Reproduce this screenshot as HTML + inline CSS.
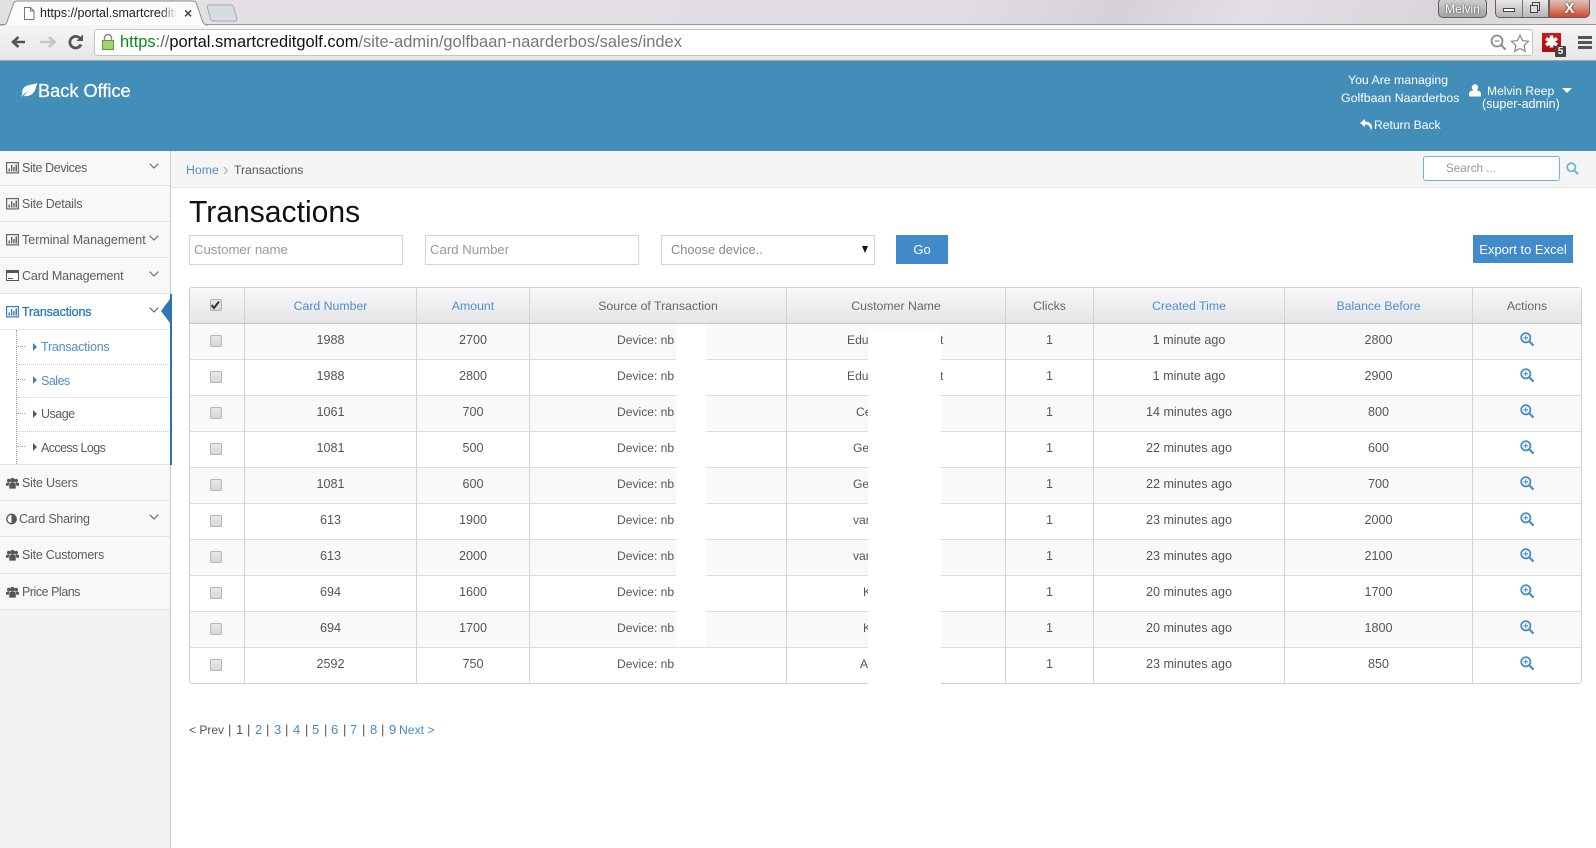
<!DOCTYPE html>
<html><head><meta charset="utf-8"><title>Transactions</title>
<style>
*{box-sizing:border-box}
html,body{margin:0;padding:0;width:1596px;height:848px;overflow:hidden;background:#fff;font-family:"Liberation Sans",sans-serif;font-size:13px;color:#555}
a{color:#428bca;text-decoration:none}
.t{position:absolute;white-space:nowrap;line-height:16px}
.abs{position:absolute}
#strip{left:0;top:0;width:1596px;height:25px;background:linear-gradient(115deg,#e4dee5 0,#e2dce4 60%,#d6d0d8 70%,#e4dee6 78%,#dad4db 90%,#e6e0e7 100%);border-bottom:1px solid #9a979b}
#bar{left:0;top:25px;width:1596px;height:36px;background:linear-gradient(#f6f6f6,#e6e6e6);border-bottom:1px solid #a5a5a5}
#url{left:94px;top:29px;width:1439px;height:27px;background:#fff;border:1px solid #c4c4c4;border-radius:3px}
#hdr{left:0;top:61px;width:1596px;height:90px;background:#438eb9}
#side{left:0;top:151px;width:171px;height:697px;background:#f2f2f2;border-right:1px solid #ccc}
.sb{position:absolute;left:0;width:170px;background:#f8f8f8;border-bottom:1px solid #e5e5e5}
.si{position:absolute;left:0;width:170px;white-space:nowrap;line-height:16px;font-size:12.5px;color:#5c5c5c}
.dot{position:absolute;left:17px;width:153px;border-top:1px dotted #ccc}
.dash{position:absolute;left:17px;width:8px;border-top:1px dotted #7aa9cf}
.car{position:absolute;left:33px;width:0;height:0;border-left:4px solid #4a7fa8;border-top:4px solid transparent;border-bottom:4px solid transparent}
#crumb{left:171px;top:151px;width:1425px;height:37px;background:#f5f5f5;border-bottom:1px solid #e5e5e5}
.inp{position:absolute;background:#fff;border:1px solid #d5d5d5;height:30px;top:235px;width:214px;color:#999;line-height:27px;padding-left:4px;font-size:13.2px}
.btn{position:absolute;background:#428bca;color:#fff;text-align:center;font-size:13px}
#wrap{left:189px;top:287px;width:1393px;height:397px;border:1px solid #d0ced4;border-radius:3px;overflow:hidden}
table{border-collapse:separate;border-spacing:0;table-layout:fixed;width:1391px}
th,td{padding:0 0 3px;text-align:center;font-weight:normal;border-right:1px solid #d3d2d6;border-bottom:1px solid #dcdcdc;height:36px;font-size:12.6px;position:relative;color:#555}
th{background:linear-gradient(#f8f8f9,#e5e5e8);border-bottom-color:#c6c5cb;height:36px;padding:0;font-size:12.3px;color:#666}
th a{color:#4c8fcf}
th:last-child,td:last-child{border-right:0}
tr.o td{background:#f9f9f9}
tr:last-child td{border-bottom:0;height:35px}
td input,th input{appearance:none;-webkit-appearance:none;display:block;width:12px;height:12px;margin:2px auto 0;border:1px solid #b5b5b5;border-radius:2px;background:linear-gradient(#e9e9e9,#d6d6d6);position:relative;left:-1px}
td.src span,td.nm span{position:absolute;top:8px;line-height:16px;font-size:12.1px}
td.src span{left:87px}
.w{position:absolute;background:#fff}
.mag{display:block;margin:0 auto;width:14px;height:14px;position:relative;top:-1px}
</style></head><body>
<svg width="0" height="0" style="position:absolute">
<symbol id="chart" viewBox="0 0 13 12"><rect x=".6" y=".6" width="11.8" height="10.3" fill="none" stroke="currentColor" stroke-width="1.2"/><path d="M2.5 9.500h1.500V6.500H2.500zM5 9.500h1.400V3H5zM7.300 9.500h1.400V5H7.300zM9.500 9.500H11V2.500H9.500z" fill="currentColor"/></symbol>
<symbol id="users" viewBox="0 0 14 12"><circle cx="3" cy="3.300" r="1.900" fill="currentColor"/><circle cx="11" cy="3.300" r="1.900" fill="currentColor"/><circle cx="7" cy="3" r="2.500" fill="currentColor"/><path d="M0 9V7c0-1 1-1.500 2-1.500h2L3 7.500V9zM14 9V7c0-1-1-1.500-2-1.500h-2l1 2V9zM3.500 12V8c0-1.500 1-2.400 2-2.400h3c1 0 2 .9 2 2.400v4z" fill="currentColor"/></symbol>
<symbol id="chev" viewBox="0 0 10 6"><path d="M.7.7 5 5l4.300-4.300" fill="none" stroke="#666" stroke-width="1.100"/></symbol>
<symbol id="zoom" viewBox="0 0 14 14"><circle cx="5.800" cy="5.800" r="4.600" fill="none" stroke="#4a8fc5" stroke-width="1.800"/><path d="M9.200 9.200 13 13" stroke="#4a8fc5" stroke-width="2.200" stroke-linecap="round"/><path d="M3.500 5.800h4.600M5.800 3.500v4.600" stroke="#4a8fc5" stroke-width="1.100"/></symbol>
</svg>

<!-- browser chrome -->
<div id="strip" class="abs"></div>
<div id="bar" class="abs"></div>
<svg class="abs" style="left:0;top:0" width="260" height="27"><path d="M0 25H3C6 25 7 22 8 19L13 5C14 2 15 1 18 1H192C195 1 196 2 197 5L202 20C203 23 204 25 208 25" fill="#fbfbfb" stroke="#8f8d91"/><path d="M207 6C207 5.500 208 5 209 5H231C232 5 233 5.500 233.500 7L237 19C237.500 20.500 237 21 235 21H213C211.500 21 211 20.500 210.500 19Z" fill="#d6dce4" stroke="#a9a9ad"/><path d="M24.500 7.500h6l3.500 3.500v8.500h-9.500zM30.500 7.500V11H34" fill="#fff" stroke="#777"/></svg>
<div class="t" style="left:40px;top:5px;width:136px;overflow:hidden;font-size:12.5px;color:#222">https://portal.smartcreditgolf.com</div>
<div class="abs" style="left:160px;top:4px;width:17px;height:18px;background:linear-gradient(90deg,rgba(251,251,251,0),#fbfbfb)"></div>
<div class="t" style="left:184px;top:5px;font-size:14px;font-weight:bold;color:#444">×</div>

<svg class="abs" style="left:6px;top:32px" width="84" height="22"><path d="M19 10H8M12.500 5 7 10l5.500 5" fill="none" stroke="#555" stroke-width="2.600"/><path d="M34 10h13M43 5l5.500 5-5.500 5" fill="none" stroke="#c6c6c6" stroke-width="2.600"/><path d="M75 12.500a5.800 5.800 0 1 1-.8-6" fill="none" stroke="#555" stroke-width="2.800"/><path d="M77 2.500v6.500h-6.500z" fill="#555"/></svg>
<div id="url" class="abs"></div>
<svg class="abs" style="left:101px;top:33px" width="14" height="18"><path d="M3.500 8V5a3.500 3.500 0 0 1 7 0v3" fill="none" stroke="#888" stroke-width="1.500"/><rect x="1.500" y="7.500" width="11" height="9" fill="#9fd36c" stroke="#5f9a3c"/></svg>
<div class="t" style="left:120px;top:34px;font-size:16.450px;color:#777"><span style="color:#0a8a16">https</span><span style="color:#666">://</span><span style="color:#111">portal.smartcreditgolf.com</span>/site-admin/golfbaan-naarderbos/sales/index</div>
<svg class="abs" style="left:1489px;top:33px" width="44" height="20"><circle cx="8" cy="8" r="5.500" fill="none" stroke="#8b8b8b" stroke-width="1.800"/><path d="M12 12l4.500 4.500" stroke="#8b8b8b" stroke-width="2"/><path d="M5.500 8h5" stroke="#8b8b8b" stroke-width="1.200"/><path d="M31 2l2.600 5.600 6 .7-4.500 4.100 1.200 6L31 15.400l-5.300 3 1.200-6-4.500-4.100 6-.7z" fill="#fdfdfd" stroke="#8b8b8b" stroke-width="1.200"/></svg>
<div class="abs" style="left:1542px;top:33px;width:19px;height:19px;background:linear-gradient(#d3141a,#a80d12)"></div>
<svg class="abs" style="left:1542px;top:33px" width="19" height="19"><path d="M9.500 2.500v12M4 5.500l11 6.500M15 5.500l-11 6.500" stroke="#fff" stroke-width="3.600"/></svg>
<div class="abs" style="left:1555px;top:46px;width:11px;height:11px;background:#444;border-radius:1px;color:#fff;font:bold 10px/11px 'Liberation Sans',sans-serif;text-align:center">5</div>
<div class="abs" style="left:1578px;top:36px;width:14px;height:3px;background:#555;box-shadow:0 5px 0 #555,0 10px 0 #555"></div>

<div class="abs" style="left:1438px;top:-2px;width:49px;height:20px;background:linear-gradient(#d2d0d2,#a5a3a5);border:1px solid #5f5f61;border-radius:5px;color:#fff;text-align:center;font:12px/21px 'Liberation Sans',sans-serif;text-shadow:0 0 2px #333">Melvin</div>
<div class="abs" style="left:1495px;top:-2px;width:54px;height:20px;background:linear-gradient(#eeeaee,#b5b3b6);border:1px solid #626064;border-radius:0 0 0 5px"></div>
<div class="abs" style="left:1522px;top:0;width:1px;height:17px;background:#77757a"></div>
<div class="abs" style="left:1503px;top:8px;width:12px;height:4px;background:#fff;border:1px solid #444"></div>
<div class="abs" style="left:1532px;top:2px;width:8px;height:9px;border:1.500px solid #444"></div>
<div class="abs" style="left:1530px;top:5px;width:8px;height:8px;border:1.500px solid #444;background:#dedcdf"></div>
<div class="abs" style="left:1549px;top:-2px;width:41px;height:20px;background:linear-gradient(#d9c9c6 0,#d9947f 45%,#c9492f 100%);border:1px solid #7a5a55;border-radius:0 0 5px 0;color:#fff;text-align:center;font:bold 15px/20px 'Liberation Sans',sans-serif;text-shadow:0 0 2px #222">X</div>

<!-- header -->
<div id="hdr" class="abs"></div>
<svg class="abs" style="left:20px;top:82px" width="18" height="16"><path d="M1 15C3 13 5 11 9 8 6 11 5 12.500 4 14c5 1 10-2 11.500-7C16 5 17 2 17.500 1 13 3 5 2 2.500 8 2 10 2 11 2.500 12.500 1.500 13.500 1 14 1 15z" fill="#fff"/></svg>
<div class="t" style="left:38px;top:82px;line-height:18px;font-size:18.200px;color:#fff;-webkit-text-stroke:.25px #fff">Back Office</div>
<div class="t" style="left:1348px;top:72px;color:#fff;font-size:12.300px">You Are managing</div>
<div class="t" style="left:1341px;top:90px;color:#fff;font-size:12.400px">Golfbaan Naarderbos</div>
<svg class="abs" style="left:1469px;top:84px" width="12" height="13"><circle cx="6" cy="3.500" r="3.200" fill="#fff"/><path d="M0 12.500V10c0-2 2-3.500 3.500-3.500h5C10 6.500 12 8 12 10v2.500z" fill="#fff"/></svg>
<div class="t" style="left:1487px;top:83px;color:#fff;font-size:12.100px">Melvin Reep</div>
<div class="abs" style="left:1562px;top:88px;width:0;height:0;border-left:5px solid transparent;border-right:5px solid transparent;border-top:5px solid #fff"></div>
<div class="t" style="left:1482px;top:96px;color:#fff;font-size:12.500px">(super-admin)</div>
<svg class="abs" style="left:1360px;top:118px" width="13" height="13"><path d="M5 1 0 5l5 4V6.500c3 0 5 1 6 6 2-4 1-8.500-6-9z" fill="#fff"/></svg>
<div class="t" style="left:1374px;top:117px;color:#fff;font-size:12.100px">Return Back</div>

<!-- sidebar -->
<div id="side" class="abs"></div>
<div class="sb" style="top:151px;height:35px"></div>
<div class="sb" style="top:186px;height:36px"></div>
<div class="sb" style="top:222px;height:36px"></div>
<div class="sb" style="top:258px;height:36px"></div>
<div class="sb" style="top:294px;height:36px;background:#fff"></div>
<div class="sb" style="top:330px;height:135px;background:#fff"></div>
<div class="sb" style="top:465px;height:36px"></div>
<div class="sb" style="top:501px;height:36px"></div>
<div class="sb" style="top:537px;height:37px"></div>
<div class="sb" style="top:574px;height:36px"></div>
<div class="abs" style="left:170px;top:294px;width:2px;height:171px;background:#2e74ab"></div>
<div class="abs" style="left:161px;top:299px;width:0;height:0;border-right:9px solid #2e7ab8;border-top:12px solid transparent;border-bottom:12px solid transparent"></div>
<svg class="abs" style="left:6px;top:162px;color:#666" width="13" height="12"><use href="#chart"/></svg>
<svg class="abs" style="left:6px;top:198px;color:#666" width="13" height="12"><use href="#chart"/></svg>
<svg class="abs" style="left:6px;top:234px;color:#666" width="13" height="12"><use href="#chart"/></svg>
<div class="abs" style="left:6px;top:270px;width:13px;height:11px;border:1px solid #555;border-top:3px solid #555;background:#fff"></div>
<div class="abs" style="left:8px;top:278px;width:5px;height:1px;background:#555"></div>
<svg class="abs" style="left:6px;top:306px;color:#3a7fb5" width="13" height="12"><use href="#chart"/></svg>
<svg class="abs" style="left:6px;top:477px;color:#555" width="13" height="12"><use href="#users"/></svg>
<svg class="abs" style="left:6px;top:513px" width="11" height="12"><circle cx="5.500" cy="6" r="4.700" fill="#fff" stroke="#555" stroke-width="1.300"/><path d="M5.500 1.300a4.700 4.700 0 0 1 0 9.400z" fill="#555"/></svg>
<svg class="abs" style="left:6px;top:549px;color:#555" width="13" height="12"><use href="#users"/></svg>
<svg class="abs" style="left:6px;top:586px;color:#555" width="13" height="12"><use href="#users"/></svg>
<div class="si" style="left:22px;top:160px;width:auto;letter-spacing:-.38px">Site Devices</div>
<div class="si" style="left:22px;top:196px;width:auto;letter-spacing:-.25px">Site Details</div>
<div class="si" style="left:22px;top:232px;width:auto;letter-spacing:0">Terminal Management</div>
<div class="si" style="left:22px;top:268px;width:auto;letter-spacing:-.14px">Card Management</div>
<div class="si" style="left:22px;top:304px;width:auto;color:#2f7bb5;-webkit-text-stroke:.3px #2f7bb5;letter-spacing:-.14px">Transactions</div>
<div class="si" style="left:22px;top:475px;width:auto;letter-spacing:-.2px">Site Users</div>
<div class="si" style="left:19px;top:511px;width:auto;letter-spacing:-.25px">Card Sharing</div>
<div class="si" style="left:22px;top:547px;width:auto;letter-spacing:-.25px">Site Customers</div>
<div class="si" style="left:22px;top:584px;width:auto;letter-spacing:-.48px">Price Plans</div>
<svg class="abs" style="left:149px;top:163px" width="10" height="6"><use href="#chev"/></svg>
<svg class="abs" style="left:149px;top:235px" width="10" height="6"><use href="#chev"/></svg>
<svg class="abs" style="left:149px;top:271px" width="10" height="6"><use href="#chev"/></svg>
<svg class="abs" style="left:149px;top:307px" width="10" height="6"><use href="#chev"/></svg>
<svg class="abs" style="left:149px;top:514px" width="10" height="6"><use href="#chev"/></svg>
<div class="abs" style="left:16px;top:330px;height:134px;border-left:1px dotted #7aa9cf"></div>
<div class="dot" style="top:364px"></div><div class="dot" style="top:397px"></div><div class="dot" style="top:431px"></div>
<div class="dash" style="top:346px"></div><div class="dash" style="top:379px"></div><div class="dash" style="top:413px"></div><div class="dash" style="top:446px"></div>
<div class="car" style="top:343px"></div><div class="car" style="top:376px"></div><div class="car" style="top:410px;border-left-color:#555"></div><div class="car" style="top:443px;border-left-color:#555"></div>
<div class="si" style="left:41px;top:339px;width:auto;color:#4f8fc9;letter-spacing:-.22px">Transactions</div>
<div class="si" style="left:41px;top:373px;width:auto;color:#4f8fc9;letter-spacing:-.5px">Sales</div>
<div class="si" style="left:41px;top:406px;width:auto;letter-spacing:-.5px">Usage</div>
<div class="si" style="left:41px;top:440px;width:auto;letter-spacing:-.6px">Access Logs</div>

<!-- breadcrumb -->
<div id="crumb" class="abs"></div>
<div class="t" style="left:186px;top:162px;font-size:12.300px"><a href="#" style="color:#4f8fc9">Home</a></div>
<svg class="abs" style="left:223px;top:166px" width="6" height="9"><path d="M1 1l3.500 3.500L1 8" fill="none" stroke="#aaa"/></svg>
<div class="t" style="left:234px;top:162px;font-size:12.200px;color:#555">Transactions</div>
<div class="abs" style="left:1423px;top:156px;width:137px;height:25px;background:#fff;border:1px solid #6fb3e0;border-radius:3px;color:#999;line-height:23px;padding-left:22px;font-size:11.700px">Search ...</div>
<svg class="abs" style="left:1566px;top:162px" width="13" height="13"><circle cx="5.300" cy="5.300" r="4.100" fill="none" stroke="#6fb3e0" stroke-width="1.800"/><path d="M8.300 8.300l4 4" stroke="#6fb3e0" stroke-width="2"/></svg>

<!-- content -->
<div class="t" style="left:189px;top:195px;font-size:30.100px;line-height:36px;color:#111">Transactions</div>
<div class="inp" style="left:189px">Customer name</div>
<div class="inp" style="left:425px">Card Number</div>
<div class="inp" style="left:661px;padding-left:9px;color:#888;font-size:12.800px">Choose device..</div>
<div class="abs" style="left:862px;top:246px;width:0;height:0;border-left:3.500px solid transparent;border-right:3.500px solid transparent;border-top:7px solid #111"></div>
<div class="btn" style="left:896px;top:235px;width:52px;height:29px;line-height:29px">Go</div>
<div class="btn" style="left:1473px;top:235px;width:100px;height:28px;line-height:30px">Export to Excel</div>

<div id="wrap" class="abs">
<table>
<colgroup><col style="width:55px"><col style="width:172px"><col style="width:113px"><col style="width:257px"><col style="width:219px"><col style="width:88px"><col style="width:191px"><col style="width:188px"><col style="width:108px"></colgroup>
<thead><tr>
<th><input type="checkbox" style="margin-top:-2px"></th><th><a href="#">Card Number</a></th><th><a href="#">Amount</a></th><th>Source of Transaction</th><th>Customer Name</th><th>Clicks</th><th><a href="#">Created Time</a></th><th><a href="#">Balance Before</a></th><th>Actions</th>
</tr></thead>
<tbody>
<tr class="o"><td><input type="checkbox"></td><td>1988</td><td>2700</td><td class="src"><span>Device: nb</span></td><td class="nm"><span style="left:60px">Edu</span><span style="left:153px">t</span></td><td>1</td><td>1 minute ago</td><td>2800</td><td><svg class="mag"><use href="#zoom"/></svg></td></tr>
<tr><td><input type="checkbox"></td><td>1988</td><td>2800</td><td class="src"><span>Device: nb</span></td><td class="nm"><span style="left:60px">Edu</span><span style="left:153px">t</span></td><td>1</td><td>1 minute ago</td><td>2900</td><td><svg class="mag"><use href="#zoom"/></svg></td></tr>
<tr class="o"><td><input type="checkbox"></td><td>1061</td><td>700</td><td class="src"><span>Device: nb</span></td><td class="nm"><span style="left:69px">Ce</span></td><td>1</td><td>14 minutes ago</td><td>800</td><td><svg class="mag"><use href="#zoom"/></svg></td></tr>
<tr><td><input type="checkbox"></td><td>1081</td><td>500</td><td class="src"><span>Device: nb</span></td><td class="nm"><span style="left:66px">Ge</span></td><td>1</td><td>22 minutes ago</td><td>600</td><td><svg class="mag"><use href="#zoom"/></svg></td></tr>
<tr class="o"><td><input type="checkbox"></td><td>1081</td><td>600</td><td class="src"><span>Device: nb</span></td><td class="nm"><span style="left:66px">Ge</span></td><td>1</td><td>22 minutes ago</td><td>700</td><td><svg class="mag"><use href="#zoom"/></svg></td></tr>
<tr><td><input type="checkbox"></td><td>613</td><td>1900</td><td class="src"><span>Device: nb</span></td><td class="nm"><span style="left:66px">var</span></td><td>1</td><td>23 minutes ago</td><td>2000</td><td><svg class="mag"><use href="#zoom"/></svg></td></tr>
<tr class="o"><td><input type="checkbox"></td><td>613</td><td>2000</td><td class="src"><span>Device: nb</span></td><td class="nm"><span style="left:66px">var</span></td><td>1</td><td>23 minutes ago</td><td>2100</td><td><svg class="mag"><use href="#zoom"/></svg></td></tr>
<tr><td><input type="checkbox"></td><td>694</td><td>1600</td><td class="src"><span>Device: nb</span></td><td class="nm"><span style="left:76px">K</span></td><td>1</td><td>20 minutes ago</td><td>1700</td><td><svg class="mag"><use href="#zoom"/></svg></td></tr>
<tr class="o"><td><input type="checkbox"></td><td>694</td><td>1700</td><td class="src"><span>Device: nb</span></td><td class="nm"><span style="left:76px">K</span></td><td>1</td><td>20 minutes ago</td><td>1800</td><td><svg class="mag"><use href="#zoom"/></svg></td></tr>
<tr><td><input type="checkbox"></td><td>2592</td><td>750</td><td class="src"><span>Device: nb</span></td><td class="nm"><span style="left:73px">A</span></td><td>1</td><td>23 minutes ago</td><td>850</td><td><svg class="mag"><use href="#zoom"/></svg></td></tr>
</tbody></table>
</div>
<svg class="abs" style="left:209px;top:299px" width="13" height="12"><path d="M2.500 6l2.500 3L10 2.500" fill="none" stroke="#333" stroke-width="2"/></svg>
<div class="w" style="left:676px;top:324px;width:30px;height:323px"></div>
<div class="w" style="left:868px;top:329px;width:73px;height:355px"></div>

<!-- pagination -->
<div class="t" style="left:189px;top:722px;font-size:12px">&lt; Prev</div>
<div class="t" style="left:228px;top:722px">|</div><div class="t" style="left:236px;top:722px">1</div>
<div class="t" style="left:247px;top:722px">|</div><div class="t" style="left:255px;top:722px"><a href="#">2</a></div>
<div class="t" style="left:266px;top:722px">|</div><div class="t" style="left:274px;top:722px"><a href="#">3</a></div>
<div class="t" style="left:285px;top:722px">|</div><div class="t" style="left:293px;top:722px"><a href="#">4</a></div>
<div class="t" style="left:305px;top:722px">|</div><div class="t" style="left:312px;top:722px"><a href="#">5</a></div>
<div class="t" style="left:324px;top:722px">|</div><div class="t" style="left:331px;top:722px"><a href="#">6</a></div>
<div class="t" style="left:343px;top:722px">|</div><div class="t" style="left:350px;top:722px"><a href="#">7</a></div>
<div class="t" style="left:362px;top:722px">|</div><div class="t" style="left:370px;top:722px"><a href="#">8</a></div>
<div class="t" style="left:381px;top:722px">|</div><div class="t" style="left:389px;top:722px"><a href="#">9</a></div>
<div class="t" style="left:399px;top:722px;font-size:12.200px"><a href="#">Next &gt;</a></div>
</body></html>
